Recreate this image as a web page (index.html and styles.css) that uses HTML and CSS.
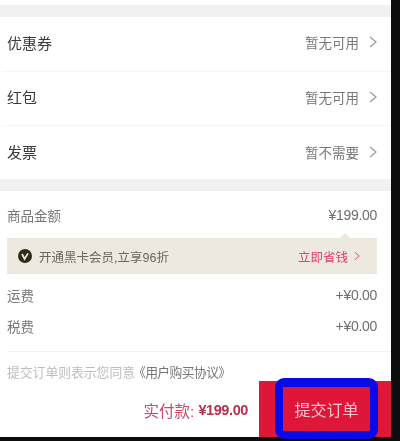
FILE: index.html
```html
<!DOCTYPE html>
<html lang="zh">
<head>
<meta charset="utf-8">
<title>提交订单</title>
<link rel="stylesheet" href="styles.css">
</head>
<body>
<main class="screen">
  <div class="band band-top"></div>
  <section class="options">
    <div class="row"><span class="row-label">优惠券</span><span class="row-value">暂无可用<svg class="chev" viewBox="0 0 8 12"><path d="M1 1l6 5-6 5"/></svg></span></div>
    <div class="row"><span class="row-label">红包</span><span class="row-value">暂无可用<svg class="chev" viewBox="0 0 8 12"><path d="M1 1l6 5-6 5"/></svg></span></div>
    <div class="row"><span class="row-label">发票</span><span class="row-value">暂不需要<svg class="chev" viewBox="0 0 8 12"><path d="M1 1l6 5-6 5"/></svg></span></div>
  </section>
  <div class="band"></div>
  <section class="summary">
    <div class="line line-first"><span>商品金额</span><span class="num">¥199.00</span></div>
    <div class="promo">
      <span class="promo-left">
        <svg class="badge" viewBox="0 0 14 14"><circle cx="7" cy="7" r="7" fill="#2e2a1c"/><path d="M4 5l2.6 5L10 4.4" fill="none" stroke="#efe6c8" stroke-width="1.8"/></svg>
        开通黑卡会员,立享96折
      </span>
      <span class="promo-link">立即省钱<svg class="chev chev-red" viewBox="0 0 8 12"><path d="M1 1l6 5-6 5"/></svg></span>
    </div>
    <div class="line line-fee"><span>运费</span><span class="num">+¥0.00</span></div>
    <div class="line line-tax"><span>税费</span><span class="num">+¥0.00</span></div>
  </section>
  <p class="agree">提交订单则表示您同意<span class="agree-link">《用户购买协议》</span></p>
  <footer class="bar">
    <div class="total">实付款: <b>¥199.00</b></div>
    <div class="submit"><span class="submit-box">提交订单</span></div>
  </footer>
</main>
</body>
</html>
```
FILE: styles.css
```css
* { box-sizing: border-box; }
html, body { margin: 0; height: 441px; overflow: hidden; background: #0c0c0c; }
body { font-family: "Liberation Sans", "Noto Sans CJK SC", sans-serif; }
.screen {
  width: 391px;
  height: 437px;
  background: #fff;
  padding-top: 5px;
  display: flex;
  flex-direction: column;
  filter: blur(0.6px);
}
.band { height: 12px; background: #f1f1f1; flex: none; }
.options { padding-left: 2px; }
.row {
  height: 54.5px;
  display: flex;
  align-items: center;
  justify-content: space-between;
  padding: 0 14px 3px 5px;
  border-bottom: 1px solid #f5f5f5;
  font-size: 15px;
  color: #3a3a3a;
}
.row:last-child { border-bottom: 0; height: 53px; padding-bottom: 2px; }
.row-value { display: flex; align-items: center; font-size: 13.5px; color: #777; }
.chev { width: 8px; height: 12px; margin-left: 10px; fill: none; stroke: #999; stroke-width: 1.2; }
.summary { padding: 0 14px 0 7px; }
.line {
  display: flex;
  justify-content: space-between;
  align-items: center;
  font-size: 13.5px;
  color: #777;
}
.num { font-size: 14px; color: #6e6e6e; letter-spacing: -0.3px; }
.line-first { height: 47px; }
.promo {
  position: relative;
  height: 36px;
  background: #eee9df;
  display: flex;
  align-items: center;
  justify-content: space-between;
  padding: 0 17px 0 11px;
  font-size: 12.5px;
  color: #6a665c;
}
.promo::before {
  content: "";
  position: absolute;
  top: -5px;
  right: 27px;
  border: 5px solid transparent;
  border-top: 0;
  border-bottom-color: #eee9df;
}
.promo-left { display: flex; align-items: center; gap: 7px; }
.badge { width: 14px; height: 14px; }
.promo-link { display: flex; align-items: center; color: #d8466a; }
.chev-red { width: 6px; height: 10px; margin-left: 6px; stroke: #d8466a; }
.line-fee { height: 39px; padding-top: 2px; }
.line-tax { height: 27px; padding-bottom: 1px; }
.agree {
  margin: 11px 0 0 7px;
  padding-top: 10px;
  height: 49px;
  border-top: 1px solid #f3f3f3;
  font-size: 12.8px;
  color: #bdbdbd;
  flex: none;
}
.agree-link { color: #777; margin-left: -2px; letter-spacing: -0.6px; }
.bar {
  flex: 1;
  margin-top: -19px;
  display: flex;
  justify-content: flex-end;
  align-items: stretch;
}
.total {
  display: flex;
  align-items: center;
  gap: 4px;
  padding-right: 11px;
  padding-top: 2px;
  font-size: 15.5px;
  color: #c8496a;
}
.total b { color: #b5304f; letter-spacing: -0.4px; font-size: 14.5px; }
.submit {
  width: 132px;
  background: #de1738;
  position: relative;
}
.submit-box {
  position: absolute;
  left: 16px;
  top: -3px;
  bottom: -2px;
  width: 103px;
  border: 8px solid #0a0ae6;
  border-top-width: 9px;
  border-radius: 9px;
  background: #de1738;
  color: #f6c8d0;
  font-size: 16px;
  display: flex;
  align-items: center;
  justify-content: center;
}
```
